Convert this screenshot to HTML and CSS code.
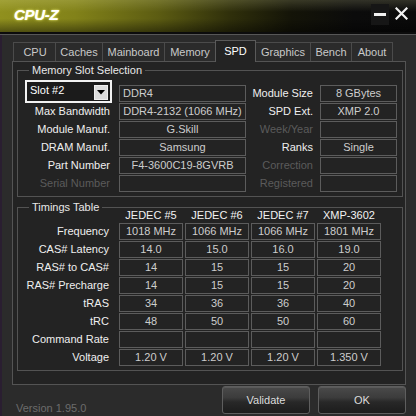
FILE: index.html
```html
<!DOCTYPE html>
<html lang="en">
<head>
<meta charset="utf-8">
<title>CPU-Z</title>
<link rel="stylesheet" href="styles.css">
</head>
<body>
<div class="window">
  <header class="titlebar">
    <span class="app-title">CPU-Z</span>
    <div class="win-controls">
      <span class="win-btn win-min"><span class="min-bar"></span></span>
      <span class="win-btn win-close">
        <svg width="13" height="13" viewBox="0 0 13 13"><path d="M1.5 1.5 L11.5 11.5 M11.5 1.5 L1.5 11.5" stroke="#f2f2f2" stroke-width="2.2" stroke-linecap="square" fill="none"/></svg>
      </span>
    </div>
  </header>
  <nav class="tabs">
    <span class="tab tab-cpu">CPU</span>
    <span class="tab tab-caches">Caches</span>
    <span class="tab tab-mainboard">Mainboard</span>
    <span class="tab tab-memory">Memory</span>
    <span class="tab tab-spd active">SPD</span>
    <span class="tab tab-graphics">Graphics</span>
    <span class="tab tab-bench">Bench</span>
    <span class="tab tab-about">About</span>
  </nav>
  <main class="panel">
    <fieldset class="group group-slot">
      <legend>Memory Slot Selection</legend>
      <div class="slot-grid">
        <div class="select">
          <span class="select-value">Slot #2</span>
          <span class="select-arrow"><svg width="8" height="5" viewBox="0 0 8 5"><polygon points="0,0 8,0 4,4.5" fill="#000"/></svg></span>
        </div>
        <div class="field left">DDR4</div>
        <div class="label">Module Size</div>
        <div class="field">8 GBytes</div>

        <div class="label">Max Bandwidth</div>
        <div class="field">DDR4-2132 (1066 MHz)</div>
        <div class="label">SPD Ext.</div>
        <div class="field">XMP 2.0</div>

        <div class="label">Module Manuf.</div>
        <div class="field">G.Skill</div>
        <div class="label disabled">Week/Year</div>
        <div class="field"></div>

        <div class="label">DRAM Manuf.</div>
        <div class="field">Samsung</div>
        <div class="label">Ranks</div>
        <div class="field">Single</div>

        <div class="label">Part Number</div>
        <div class="field">F4-3600C19-8GVRB</div>
        <div class="label disabled">Correction</div>
        <div class="field"></div>

        <div class="label disabled">Serial Number</div>
        <div class="field"></div>
        <div class="label disabled">Registered</div>
        <div class="field"></div>
      </div>
    </fieldset>

    <fieldset class="group group-timings">
      <legend>Timings Table</legend>
      <div class="timings-grid">
        <div class="th-empty"></div>
        <div class="th">JEDEC #5</div>
        <div class="th">JEDEC #6</div>
        <div class="th">JEDEC #7</div>
        <div class="th">XMP-3602</div>

        <div class="label">Frequency</div>
        <div class="field">1018 MHz</div>
        <div class="field">1066 MHz</div>
        <div class="field">1066 MHz</div>
        <div class="field">1801 MHz</div>

        <div class="label">CAS# Latency</div>
        <div class="field">14.0</div>
        <div class="field">15.0</div>
        <div class="field">16.0</div>
        <div class="field">19.0</div>

        <div class="label">RAS# to CAS#</div>
        <div class="field">14</div>
        <div class="field">15</div>
        <div class="field">15</div>
        <div class="field">20</div>

        <div class="label">RAS# Precharge</div>
        <div class="field">14</div>
        <div class="field">15</div>
        <div class="field">15</div>
        <div class="field">20</div>

        <div class="label">tRAS</div>
        <div class="field">34</div>
        <div class="field">36</div>
        <div class="field">36</div>
        <div class="field">40</div>

        <div class="label">tRC</div>
        <div class="field">48</div>
        <div class="field">50</div>
        <div class="field">50</div>
        <div class="field">60</div>

        <div class="label">Command Rate</div>
        <div class="field"></div>
        <div class="field"></div>
        <div class="field"></div>
        <div class="field"></div>

        <div class="label">Voltage</div>
        <div class="field">1.20 V</div>
        <div class="field">1.20 V</div>
        <div class="field">1.20 V</div>
        <div class="field">1.350 V</div>
      </div>
    </fieldset>
  </main>
  <footer class="bottombar">
    <span class="version">Version 1.95.0</span>
    <button class="btn" type="button">Validate</button>
    <button class="btn" type="button">OK</button>
  </footer>
</div>
</body>
</html>
```

FILE: styles.css
```css
* { box-sizing: border-box; }

html, body {
  margin: 0;
  padding: 0;
}

body {
  width: 416px;
  height: 416px;
  overflow: hidden;
  background: #2b2b2b;
  font-family: "Liberation Sans", Arial, sans-serif;
  font-size: 11px;
  color: #ececec;
}

.window {
  width: 416px;
  height: 416px;
  display: flex;
  flex-direction: column;
  background: #2b2b2b;
  box-shadow: inset 2px 0 0 #2a1e31;
}

/* ---------- title bar ---------- */
.titlebar {
  height: 35px;
  flex: 0 0 35px;
  display: flex;
  align-items: flex-start;
  padding-left: 14px;
  border-bottom: 1px solid #575757;
  background:
    linear-gradient(to bottom, transparent 32px, #0c0c0c 32px),
    linear-gradient(to bottom, rgba(255, 255, 190, 0.16) 0, rgba(255, 255, 190, 0) 35%, rgba(0, 0, 0, 0) 55%, rgba(0, 0, 0, 0.5) 100%),
    linear-gradient(to right, #90901e 0%, #828219 18%, #5c5c12 38%, #30300b 55%, #141408 70%, #0b0b0b 85%, #0a0a0a 100%);
}

.app-title {
  font-family: "Liberation Sans", Arial, sans-serif;
  font-weight: bold;
  font-style: italic;
  font-size: 15px;
  line-height: 18px;
  letter-spacing: -0.3px;
  padding-top: 6px;
  color: #ffffff;
  text-shadow: 0 0 3px rgba(240, 240, 110, 0.9), 0 0 1px #ffffa0;
}

.win-controls {
  margin-left: auto;
  display: flex;
  align-items: flex-start;
  padding-right: 8px;
}

.win-btn { display: flex; align-items: center; justify-content: center; }

.win-min {
  width: 18px;
  height: 21px;
  margin-top: 4px;
  background: #161616;
}

.min-bar {
  width: 12px;
  height: 3px;
  background: #f0f0f0;
  margin-top: -1px;
}

.win-close {
  margin-left: 6px;
  margin-top: 7px;
}

/* ---------- tabs ---------- */
.tabs {
  display: flex;
  align-items: flex-end;
  height: 22px;
  margin-top: 5px;
  padding-left: 13px;
  position: relative;
  z-index: 1;
}

.tab {
  height: 19px;
  margin-bottom: 1px;
  display: flex;
  align-items: center;
  justify-content: center;
  border-top: 1px solid #4b4b4b;
  border-left: 1px solid #4b4b4b;
  color: #c9c9c9;
  background: #2b2b2b;
  white-space: nowrap;
}

.tab-cpu { width: 42px; padding-left: 1px; }
.tab-caches { width: 47px; }
.tab-mainboard { width: 62px; }
.tab-memory { width: 51px; }
.tab-spd { width: 41px; }
.tab-graphics { width: 54px; }
.tab-bench { width: 41px; }
.tab-about { width: 42px; border-right: 1px solid #4b4b4b; }

.tab.active {
  height: 22px;
  margin-bottom: 0;
  padding-bottom: 2px;
  color: #ffffff;
  background: #232323;
  border-top-color: #5a5a5a;
  border-left-color: #5a5a5a;
  border-right: 1px solid #5a5a5a;
}

.tab.active + .tab { border-left: 0; }

/* ---------- panel ---------- */
.panel {
  margin-top: -1px;
  margin-left: 12px;
  width: 394px;
  height: 324px;
  flex: 0 0 324px;
  border: 1px solid #545454;
  background: #232323;
  padding: 1px 2px 0 4px;
}

.group {
  margin: 0;
  padding: 0;
  border: 1px solid #535353;
  min-width: 0;
}

.group legend {
  margin-left: 11px;
  padding: 0 3px;
  line-height: 14px;
  color: #e8e8e8;
}

.group-timings { margin-top: 3px; }

/* memory slot grid */
.slot-grid {
  display: grid;
  grid-template-columns: 94px 127px 74px 77px;
  grid-auto-rows: 17px;
  row-gap: 1px;
  margin-top: 8px;
  padding-left: 7px;
  padding-bottom: 4px;
}

.label {
  text-align: right;
  padding-right: 9px;
  line-height: 17px;
  color: #efefef;
  white-space: nowrap;
}

.slot-grid > .label:nth-child(4n+3) { padding-right: 7px; }

.label.disabled { color: #5b5b5b; }

.field {
  height: 17px;
  border: 1px solid #5c5c5c;
  background: #232323;
  color: #cdcdcd;
  text-align: center;
  line-height: 15px;
  white-space: nowrap;
  overflow: hidden;
}

.field.left {
  text-align: left;
  padding-left: 3px;
}

.select {
  width: 87px;
  height: 23px;
  margin-top: -5px;
  border: 2px solid #f2f2f2;
  background: #1b1b1b;
  display: flex;
  align-items: flex-start;
  justify-content: space-between;
  padding: 2px 2px 0 2px;
  position: relative;
  z-index: 1;
}

.select-value {
  color: #ffffff;
  line-height: 13px;
  padding-left: 1px;
}

.select-arrow {
  width: 14px;
  height: 15px;
  margin-top: 1px;
  background: #dcdcdc;
  border: 1px solid #efefef;
  display: flex;
  align-items: center;
  justify-content: center;
}

/* timings grid */
.timings-grid {
  display: grid;
  grid-template-columns: 99px repeat(4, 64px);
  grid-template-rows: 14px;
  grid-auto-rows: 17px;
  column-gap: 2px;
  row-gap: 1px;
  margin-top: -6px;
  padding-bottom: 4px;
}

.timings-grid .label { padding-right: 8px; }

.th {
  text-align: center;
  line-height: 14px;
  color: #f2f2f2;
  white-space: nowrap;
}

/* ---------- bottom bar ---------- */
.bottombar {
  flex: 1 1 auto;
  display: flex;
  align-items: flex-start;
  padding: 1px 10px 0 16px;
}

.version {
  margin-right: auto;
  align-self: flex-end;
  line-height: 13px;
  margin-bottom: 1px;
  color: #6c6c6c;
}

.btn {
  width: 88px;
  height: 28px;
  margin-left: 8px;
  font-family: "Liberation Sans", Arial, sans-serif;
  font-size: 11px;
  color: #dcdcdc;
  border: 1px solid #5e5e5e;
  border-radius: 3px;
  background: linear-gradient(to bottom, #4a4a4a 0%, #3c3c3c 40%, #282828 58%, #1c1c1c 100%);
  box-shadow: inset 0 1px 0 #5a5a5a;
  padding: 0;
}
```
